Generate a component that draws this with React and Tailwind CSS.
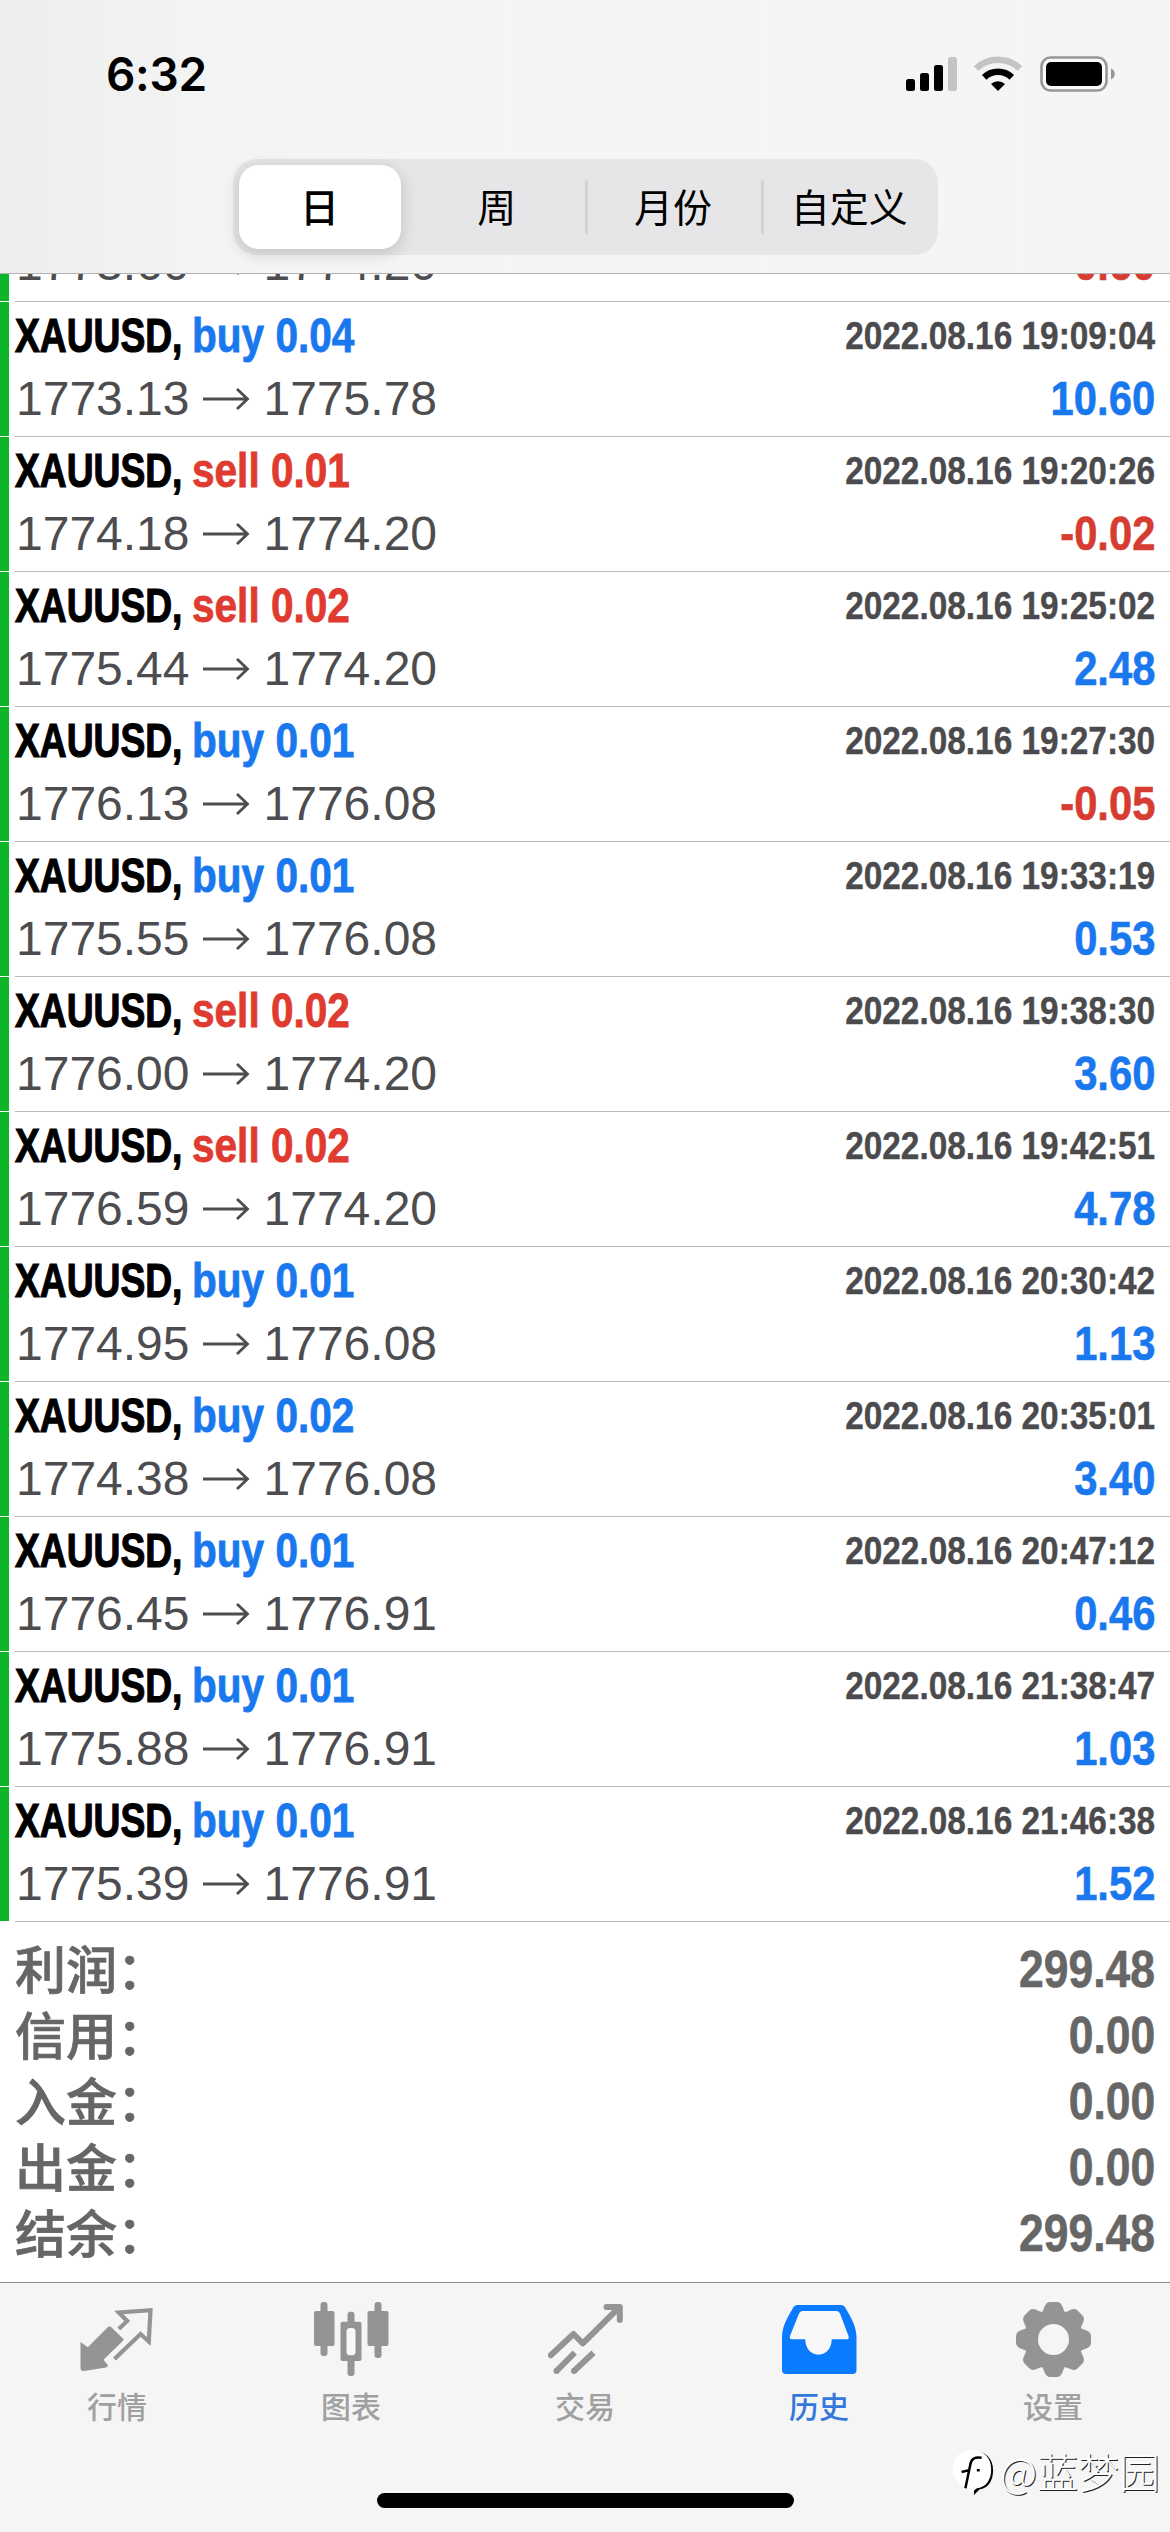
const deals = [
  { open: "1773.60", close: "1774.20", profit: "-0.60" },
  { side: "buy", volume: "0.04", open: "1773.13", close: "1775.78", time: "2022.08.16 19:09:04", profit: "10.60" },
  { side: "sell", volume: "0.01", open: "1774.18", close: "1774.20", time: "2022.08.16 19:20:26", profit: "-0.02" },
  { side: "sell", volume: "0.02", open: "1775.44", close: "1774.20", time: "2022.08.16 19:25:02", profit: "2.48" },
  { side: "buy", volume: "0.01", open: "1776.13", close: "1776.08", time: "2022.08.16 19:27:30", profit: "-0.05" },
  { side: "buy", volume: "0.01", open: "1775.55", close: "1776.08", time: "2022.08.16 19:33:19", profit: "0.53" },
  { side: "sell", volume: "0.02", open: "1776.00", close: "1774.20", time: "2022.08.16 19:38:30", profit: "3.60" },
  { side: "sell", volume: "0.02", open: "1776.59", close: "1774.20", time: "2022.08.16 19:42:51", profit: "4.78" },
  { side: "buy", volume: "0.01", open: "1774.95", close: "1776.08", time: "2022.08.16 20:30:42", profit: "1.13" },
  { side: "buy", volume: "0.02", open: "1774.38", close: "1776.08", time: "2022.08.16 20:35:01", profit: "3.40" },
  { side: "buy", volume: "0.01", open: "1776.45", close: "1776.91", time: "2022.08.16 20:47:12", profit: "0.46" },
  { side: "buy", volume: "0.01", open: "1775.88", close: "1776.91", time: "2022.08.16 21:38:47", profit: "1.03" },
  { side: "buy", volume: "0.01", open: "1775.39", close: "1776.91", time: "2022.08.16 21:46:38", profit: "1.52" },
];

const summary = [
  { label: "利润：", value: "299.48" },
  { label: "信用：", value: "0.00" },
  { label: "入金：", value: "0.00" },
  { label: "出金：", value: "0.00" },
  { label: "结余：", value: "299.48" },
];

const periods = ["日", "周", "月份", "自定义"];

function StatusBar() {
  return (
    <div className="flex h-[159px] items-start justify-between pt-[56px] pr-[54px] pl-[106px]">
      <span className="text-[46px] leading-[36px] font-semibold tracking-[-0.3px] text-black font-['Inter',sans-serif]">
        6:32
      </span>
      <div className="flex">
        {/* Signal */}
        <svg className="mr-[16px] h-[36px] w-[51px]" viewBox="0 0 51 36">
          <rect x="0" y="23" width="9" height="12" rx="2.5" />
          <rect x="14" y="17" width="9" height="18" rx="2.5" />
          <rect x="28" y="9" width="9" height="26" rx="2.5" />
          <rect x="42" y="1" width="9" height="34" rx="2.5" fill="#c4c4c4" />
        </svg>
        {/* Wifi */}
        <svg className="mr-[17px] h-[36px] w-[50px]" viewBox="0 0 50 36" fill="none">
          <path d="M3 12.5A32 32 0 0 1 47 12.5" stroke="#c4c4c4" strokeWidth="6.5" />
          <path d="M11.2 21.3A20 20 0 0 1 38.8 21.3" stroke="#000" strokeWidth="6.5" />
          <path d="M18 28A10.5 10.5 0 0 1 32 28L25 35Z" fill="#000" />
        </svg>
        {/* Battery */}
        <svg className="h-[36px] w-[76px]" viewBox="0 0 76 36">
          <rect x="1.5" y="1.5" width="65" height="33" rx="9" fill="#fafafa" stroke="#979797" strokeWidth="2.6" />
          <rect x="6" y="6" width="56" height="24" rx="5" />
          <path d="M71 12.5C76 14.5 76 21.5 71 23.5Z" fill="#979797" />
        </svg>
      </div>
    </div>
  );
}

function PeriodTabs() {
  return (
    <div className="mx-auto flex h-[96px] w-[705px] items-center rounded-[24px] bg-[#e6e6e8]">
      {periods.map((name, i) => (
        <div key={name} className="flex h-full flex-1 items-center">
          {i > 1 && <div className="-mr-[3px] h-[54px] w-[3px] rounded bg-[#d3d3d5]" />}
          <div
            className={
              i === 0
                ? "ml-[6px] flex h-[84px] w-[162px] items-center justify-center rounded-[20px] bg-white pb-[4px] text-[39px] leading-none font-medium shadow-[0_4px_14px_3px_rgba(0,0,0,0.12)]"
                : "flex flex-1 items-center justify-center pb-[4px] text-[39px] leading-none"
            }
          >
            {name}
          </div>
        </div>
      ))}
    </div>
  );
}

function DealRow({ deal }) {
  const sideColor = deal.side === "buy" ? "text-[#1a78ee]" : "text-[#df3b30]";
  const profitColor = deal.profit.startsWith("-") ? "text-[#d63c31]" : "text-[#1a78ee]";
  return (
    <div className="flex h-[135px] shrink-0">
      <div className="mb-px w-[9px] bg-[#0db528]" />
      <div className="ml-[6px] flex flex-1 flex-col justify-end gap-[3px] border-b border-[#bcbcbe] pr-[15px] pb-[7px] font-['Liberation_Sans',Arial,sans-serif]">
        {deal.side && (
          <div className="flex h-[60px] justify-between leading-[60px] font-bold whitespace-nowrap">
            <div className="flex text-[48px]">
              <div className="w-[177px]">
                <span className="inline-block origin-left scale-x-[0.775] text-black [-webkit-text-stroke:1.2px]">XAUUSD,</span>
              </div>
              <span className={`inline-block origin-left scale-x-[0.845] [-webkit-text-stroke:0.8px] ${sideColor}`}>
                {deal.side} {deal.volume}
              </span>
            </div>
            <span className="inline-block origin-right scale-x-[0.856] text-[39px] text-[#4b4b4e] [-webkit-text-stroke:0.4px]">
              {deal.time}
            </span>
          </div>
        )}
        <div className="flex h-[60px] justify-between text-[48px] leading-[60px] whitespace-nowrap">
          <div className="flex pl-px text-[#4d4d50]">
            <span>{deal.open}</span>
            <svg className="mx-[13px] mt-[18px] h-[24px] w-[48px]" viewBox="0 0 48 24" fill="none" stroke="currentColor" strokeWidth="2.8">
              <path d="M0 12H44.5M34 2L44.5 12L34 22" />
            </svg>
            <span>{deal.close}</span>
          </div>
          <span className={`inline-block origin-right scale-x-[0.87] font-bold [-webkit-text-stroke:0.6px] ${profitColor}`}>
            {deal.profit}
          </span>
        </div>
      </div>
    </div>
  );
}

function Summary() {
  return (
    <div className="h-[360px] shrink-0 px-[15px] pt-[15px] text-[#666]">
      {summary.map((row) => (
        <div key={row.label} className="flex h-[66px] justify-between text-[51px] leading-[66px]">
          <span className="-mt-[3px] font-medium [-webkit-text-stroke:0.7px]">{row.label}</span>
          <span className="inline-block origin-right scale-x-[0.872] font-bold font-['Liberation_Sans',Arial,sans-serif] [-webkit-text-stroke:0.6px]">
            {row.value}
          </span>
        </div>
      ))}
    </div>
  );
}

function QuotesIcon() {
  return (
    <svg className="h-[75px] w-[75px]" viewBox="0 0 75 75">
      <path
        d="M0.5 40L7.8 45.3L28 25Q29.5 23.5 31 25L43 36.5Q44 37.7 43 38.7L23.5 57.7L27.8 63Q28 65 26 65.5L4 69Q0.5 69.5 0.5 66Z"
        fill="currentColor"
      />
      <path d="M38.8 27L47.2 19L38.8 10.5L70.5 8.2L68.8 39.5L60.5 32L34.5 57" fill="none" stroke="currentColor" strokeWidth="4.2" />
    </svg>
  );
}

function ChartIcon() {
  return (
    <svg className="h-[75px] w-[75px]" viewBox="0 0 75 75" fill="currentColor">
      <rect x="0" y="9" width="20.5" height="35" rx="2" />
      <rect x="6.5" y="0" width="7" height="54" rx="3" />
      <rect x="26.5" y="19.7" width="21" height="39.3" rx="2" />
      <rect x="33.5" y="9.7" width="7" height="64.3" rx="3" />
      <rect x="32.5" y="26" width="9" height="27.3" rx="3.5" fill="#f8f8f8" />
      <rect x="53.5" y="9" width="21" height="35" rx="2" />
      <rect x="60.5" y="0" width="7" height="56" rx="3" />
    </svg>
  );
}

function TradeIcon() {
  return (
    <svg className="h-[75px] w-[75px]" viewBox="0 0 75 75" fill="none" stroke="currentColor" strokeWidth="6" strokeLinejoin="round">
      <path d="M2.8 53.2L25.5 32L34.8 41.3L71 5.5" strokeLinecap="round" />
      <path d="M58.5 5H71.8V18" strokeLinecap="round" />
      <path d="M26.8 50.7L8.5 69M45.5 50.7L26 69" />
      <circle cx="8.5" cy="69" r="3" fill="currentColor" stroke="none" />
      <circle cx="26" cy="69" r="3" fill="currentColor" stroke="none" />
    </svg>
  );
}

function HistoryIcon() {
  return (
    <svg className="h-[75px] w-[75px]" viewBox="0 0 75 75">
      <path
        d="M15.5 3H59Q62 3 63.5 6C70 17 74.5 25 74.5 36V68Q74.5 72 70.5 72H4Q0 72 0 68V36C0 25 4.5 17 11 6Q12.5 3 15.5 3Z"
        fill="currentColor"
      />
      <path
        d="M20.5 9H54.5Q57 9 58 11.5L66.5 34Q67.5 37.3 65 37.3H49.7C49.7 46 44.5 52.7 36.5 52.7C28.5 52.7 23.3 46 23.3 37.3H10Q7 37.3 8 34L17 11.5Q18 9 20.5 9Z"
        fill="#f8f8f8"
      />
    </svg>
  );
}

function SettingsIcon() {
  return (
    <svg className="h-[75px] w-[75px]" viewBox="-37.5 -37.5 75 75" fill="currentColor" stroke="currentColor" strokeWidth="3" strokeLinejoin="round">
      <circle r="22" fill="none" strokeWidth="13" />
      {[0, 45, 90, 135, 180, 225, 270, 315].map((deg) => (
        <path key={deg} d="M-11 -25Q-8.5 -29 -7.5 -32.5Q-6 -36 -3.5 -36H3.5Q6 -36 7.5 -32.5Q8.5 -29 11 -25Z" transform={`rotate(${deg})`} />
      ))}
    </svg>
  );
}

const tabs = [
  { name: "行情", Icon: QuotesIcon },
  { name: "图表", Icon: ChartIcon },
  { name: "交易", Icon: TradeIcon },
  { name: "历史", Icon: HistoryIcon, active: true },
  { name: "设置", Icon: SettingsIcon },
];

function TabBar() {
  return (
    <div className="relative h-[250px] shrink-0 border-t border-[#8a8a8c] bg-[#f5f5f5]">
      <div className="grid grid-cols-5 pt-[19px]">
        {tabs.map(({ name, Icon, active }) => (
          <div key={name} className={`flex flex-col items-center ${active ? "text-[#0a7aff]" : "text-[#949494]"}`}>
            <Icon />
            <span className={`mt-[6px] text-[30px] leading-[44px] font-medium ${active ? "text-[#3478dc]" : "text-[#a0a0a0]"}`}>{name}</span>
          </div>
        ))}
      </div>
      <div className="mx-auto mt-[66px] h-[15px] w-[417px] rounded-full bg-black" />
      {/* Watermark */}
      <div className="absolute top-[157px] right-[10px] flex items-center">
        <svg className="mt-[5px] h-[50px] w-[42px]" viewBox="0 0 44 52">
          <path d="M22 3C34 3 42 11 42 23C42 35 36 42 28 43L22 49L22 43C26 40 30 30 30 23Z" fill="#000" />
          <path d="M20 2C32 2 40 10 40 22C40 34 34 41 25 42L20 46L20 42C8 42 0 34 0 22C0 10 8 2 20 2Z" fill="#fff" />
          <path d="M30 10Q19 8 18 18L13 42M9 25L17 23M25 23H28" fill="none" stroke="#000" strokeWidth="2.6" />
        </svg>
        <span className="ml-[5px] text-[41px] leading-[60px] font-light whitespace-nowrap text-[#fdfdfd] [text-shadow:1px_1px_0_#222]">
          @蓝梦园
        </span>
      </div>
    </div>
  );
}

export default function App() {
  return (
    <div className="flex h-[2532px] w-[1170px] flex-col overflow-hidden bg-white text-black font-['Noto_Sans_CJK_SC',sans-serif]">
      <div className="h-[274px] shrink-0 border-b border-[#b2b2b4] bg-linear-to-r from-[#eceeec] via-[#f4f3f3] via-15% to-[#f5f5f5] to-25%">
        <StatusBar />
        <PeriodTabs />
      </div>
      {/* The first deal is scrolled halfway under the header */}
      <div className="flex h-[1648px] shrink-0 flex-col justify-end overflow-hidden">
        {deals.map((deal) => (
          <DealRow key={deal.open} deal={deal} />
        ))}
      </div>
      <Summary />
      <TabBar />
    </div>
  );
}
